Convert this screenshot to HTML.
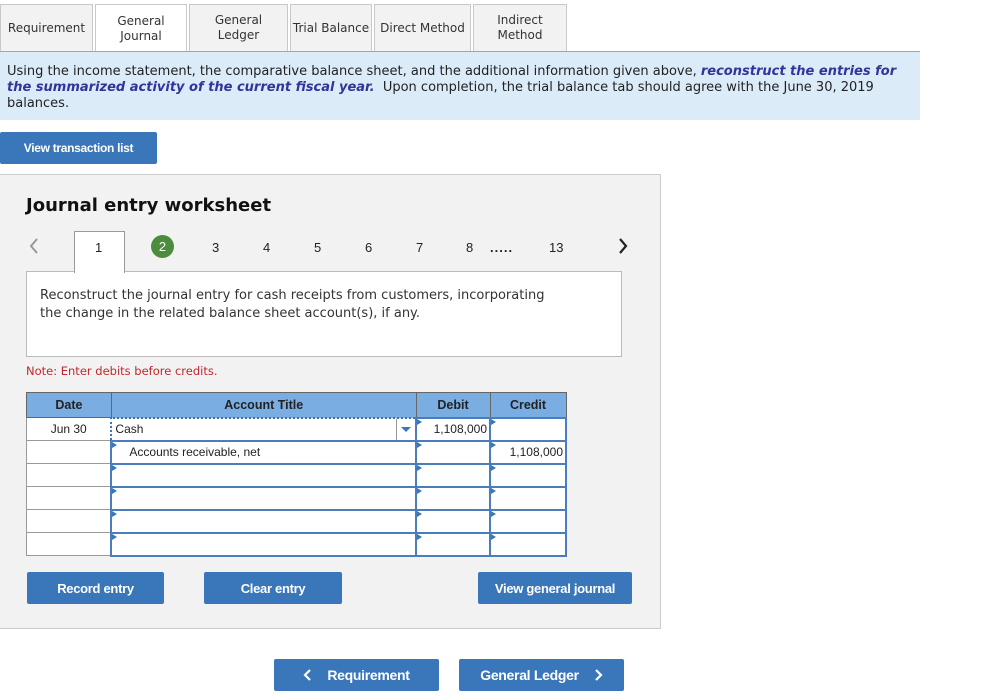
<!DOCTYPE html>
<html><head><style>
body{margin:0;width:985px;height:699px;background:#fff;position:relative;font-family:"DejaVu Sans","Liberation Sans",sans-serif;overflow:hidden;color:#222}
.a{position:absolute;box-sizing:border-box}
.tab{position:absolute;top:4px;height:47px;background:#f2f2f2;border:1px solid #c8c8c8;border-bottom:none;font-size:12px;display:flex;align-items:center;justify-content:center;text-align:center;line-height:15px;box-sizing:border-box;color:#333}
.btn{position:absolute;background:#3a76ba;color:#fff;font-family:"Liberation Sans",sans-serif;font-weight:bold;font-size:13px;display:flex;align-items:center;justify-content:center;border-radius:2px;box-sizing:border-box;letter-spacing:-0.3px}
.pg{position:absolute;top:240px;font-family:"Liberation Sans",sans-serif;font-size:13px;color:#222}
table{border-collapse:collapse;font-family:"Liberation Sans",sans-serif;font-size:12px}
td,th{padding:0;box-sizing:border-box}
.in{border:2px solid #4a7dbd;position:relative;background:#fff}
.in:before{content:"";position:absolute;left:0;top:0;border-left:5px solid #3a76ba;border-top:3px solid transparent;border-bottom:3px solid transparent;width:0;height:0;}
</style></head><body>
<div class="tab" style="left:0;width:93px;">Requirement</div>
<div class="tab" style="left:95px;width:92px;background:#fff;height:48px">General<br>Journal</div>
<div class="tab" style="left:189px;width:99px;">General<br>Ledger</div>
<div class="tab" style="left:290px;width:82px;">Trial Balance</div>
<div class="tab" style="left:374px;width:97px;">Direct Method</div>
<div class="tab" style="left:473px;width:94px;">Indirect<br>Method</div>
<div class="a" style="left:0;top:51px;width:920px;height:69px;background:#dcebf8;border-top:1px solid #9aa;padding:12px 7px;font-size:13px;line-height:16px;color:#222;white-space:nowrap">Using the income statement, the comparative balance sheet, and the additional information given above, <b><i style="color:#33339a">reconstruct the entries for</i></b><br><b><i style="color:#33339a">the summarized activity of the current fiscal year.</i></b>&nbsp; Upon completion, the trial balance tab should agree with the June 30, 2019<br>balances.</div>
<div class="btn" style="left:0;top:132px;width:157px;height:32px;font-size:12px">View transaction list</div>
<div class="a" style="left:0;top:174px;width:661px;height:455px;background:#f2f2f2;border:1px solid #ccc;border-left:none"></div>
<div class="a" style="left:26px;top:195px;font-size:18px;font-weight:bold;color:#111">Journal entry worksheet</div>
<svg class="a" style="left:28px;top:237px" width="12" height="18"><path d="M9 2 L3 9 L9 16" stroke="#999" stroke-width="2" fill="none"/></svg>
<div class="a" style="left:74px;top:231px;width:51px;height:42px;background:#fff;border:1px solid #999;border-bottom:none;z-index:2"></div>
<div class="pg" style="left:95px;z-index:3">1</div>
<div class="a" style="left:151px;top:235px;width:23px;height:23px;border-radius:50%;background:#4b8c3d;color:#fff;font-family:'Liberation Sans';font-size:13px;text-align:center;line-height:23px">2</div>
<div class="pg" style="left:212px">3</div>
<div class="pg" style="left:263px">4</div>
<div class="pg" style="left:314px">5</div>
<div class="pg" style="left:365px">6</div>
<div class="pg" style="left:416px">7</div>
<div class="pg" style="left:466px">8</div>
<div class="pg" style="left:490px;font-weight:bold;letter-spacing:1px">.....</div>
<div class="pg" style="left:549px">13</div>
<svg class="a" style="left:617px;top:237px" width="12" height="18"><path d="M3 2 L9 9 L3 16" stroke="#222" stroke-width="2.2" fill="none"/></svg>
<div class="a" style="left:26px;top:271px;width:596px;height:86px;background:#fff;border:1px solid #bbb;padding:15px 13px;font-size:13px;line-height:18px;color:#333;white-space:nowrap">Reconstruct the journal entry for cash receipts from customers, incorporating<br>the change in the related balance sheet account(s), if any.</div>
<div class="a" style="left:26px;top:364px;font-size:11.5px;color:#c0282d">Note: Enter debits before credits.</div>
<table class="a" style="left:26px;top:392px;width:541px;border:1px solid #999">
<tr style="height:25px;background:#7aaee3;color:#222"><th style="width:85px;border:1px solid #666;font-weight:bold;font-size:12.5px">Date</th><th style="width:305px;border:1px solid #666;font-size:12.5px">Account Title</th><th style="width:74px;border:1px solid #666;font-size:12.5px">Debit</th><th style="width:76px;border:1px solid #666;font-size:12.5px">Credit</th></tr>
<tr style="height:23px"><td style="text-align:center;border:1px solid #999;background:#fff">Jun 30</td><td style="border:2px dotted #3a76ba;background:#fff;padding-left:3px;position:relative">Cash<span style="position:absolute;right:4px;top:8px;border-top:5px solid #3a76ba;border-left:5px solid transparent;border-right:5px solid transparent"></span><span style="position:absolute;right:18px;top:0;bottom:0;border-left:1px solid #999"></span></td><td class="in" style="text-align:right;padding-right:2px">1,108,000</td><td class="in"></td></tr>
<tr style="height:23px"><td style="border:1px solid #999;background:#fff"></td><td class="in" style="padding-left:17px">Accounts receivable, net</td><td class="in"></td><td class="in" style="text-align:right;padding-right:2px">1,108,000</td></tr>
<tr style="height:23px"><td style="border:1px solid #999;background:#fff"></td><td class="in"></td><td class="in"></td><td class="in"></td></tr>
<tr style="height:23px"><td style="border:1px solid #999;background:#fff"></td><td class="in"></td><td class="in"></td><td class="in"></td></tr>
<tr style="height:23px"><td style="border:1px solid #999;background:#fff"></td><td class="in"></td><td class="in"></td><td class="in"></td></tr>
<tr style="height:23px"><td style="border:1px solid #999;background:#fff"></td><td class="in"></td><td class="in"></td><td class="in"></td></tr>
</table>
<div class="btn" style="left:27px;top:572px;width:137px;height:32px">Record entry</div>
<div class="btn" style="left:204px;top:572px;width:138px;height:32px">Clear entry</div>
<div class="btn" style="left:478px;top:572px;width:154px;height:32px">View general journal</div>
<div class="btn" style="left:274px;top:659px;width:165px;height:32px;font-size:14px"><svg width="10" height="12" style="margin-right:14px"><path d="M7 1 L2 6 L7 11" stroke="#fff" stroke-width="2.2" fill="none"/></svg>Requirement</div>
<div class="btn" style="left:459px;top:659px;width:165px;height:32px;font-size:14px">General Ledger<svg width="10" height="12" style="margin-left:14px"><path d="M3 1 L8 6 L3 11" stroke="#fff" stroke-width="2.2" fill="none"/></svg></div>
</body></html>
